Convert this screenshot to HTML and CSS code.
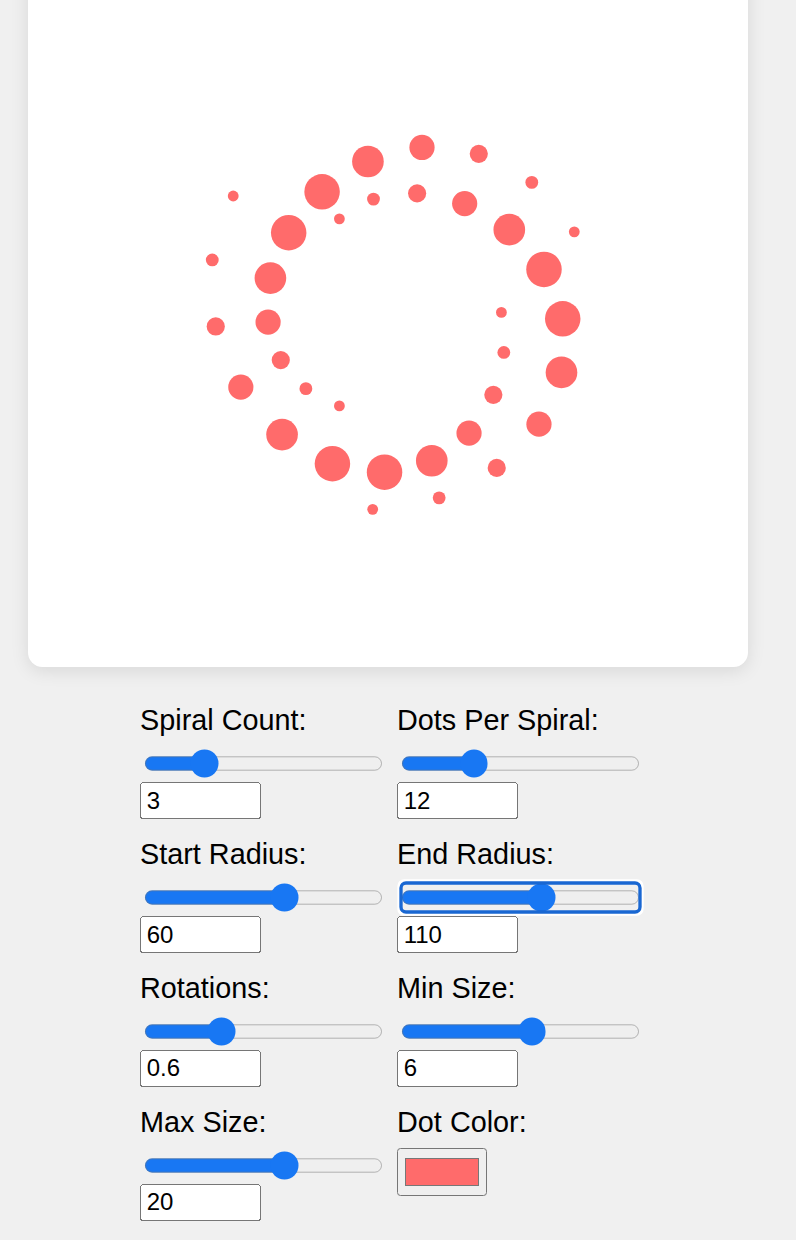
FILE: index.html
```html
<!DOCTYPE html>
<html lang="en">
<head>
<meta charset="utf-8">
<title>Spiral Dots</title>
<link rel="stylesheet" href="styles.css">
</head>
<body>
<div class="page">
  <div class="card">
    <svg id="dots" class="dots" width="400" height="400" viewBox="0 0 400 400"></svg>
  </div>
  <div class="controls">
    <div class="group">
      <label class="label">Spiral Count:</label>
      <input class="slider" type="range" min="1" max="10" step="1" value="3">
      <input class="num" type="number" value="3">
    </div>
    <div class="group">
      <label class="label">Dots Per Spiral:</label>
      <input class="slider" type="range" min="5" max="30" step="1" value="12">
      <input class="num" type="number" value="12">
    </div>
    <div class="group">
      <label class="label">Start Radius:</label>
      <input class="slider" type="range" min="0" max="100" step="1" value="60">
      <input class="num" type="number" value="60">
    </div>
    <div class="group">
      <label class="label">End Radius:</label>
      <input id="end" class="slider" type="range" min="50" max="150" step="1" value="110" autofocus>
      <input class="num" type="number" value="110">
    </div>
    <div class="group">
      <label class="label">Rotations:</label>
      <input class="slider" type="range" min="0" max="2" step="0.1" value="0.6">
      <input class="num" type="number" value="0.6" step="0.1">
    </div>
    <div class="group">
      <label class="label">Min Size:</label>
      <input class="slider" type="range" min="1" max="10" step="1" value="6">
      <input class="num" type="number" value="6">
    </div>
    <div class="group">
      <label class="label">Max Size:</label>
      <input class="slider" type="range" min="5" max="30" step="1" value="20">
      <input class="num" type="number" value="20">
    </div>
    <div class="group">
      <label class="label">Dot Color:</label>
      <input class="color" type="color" value="#ff6b6b">
    </div>
  </div>
</div>
<script src="script.js"></script>
</body>
</html>
```
FILE: styles.css
```css
html {
  zoom: 1.8;
}
body {
  margin: 0;
  background: #f0f0f0;
  font-family: "Liberation Sans", Arial, sans-serif;
  color: #000;
}
.page {
  padding-bottom: 20px;
}
.card {
  width: 400px;
  height: 400px;
  margin-top: -29.4px;
  margin-left: 15.56px;
  background: #fff;
  border-radius: 8px;
  box-shadow: 0 2px 10px rgba(0, 0, 0, 0.1);
}
.dots {
  display: block;
}
.controls {
  margin-top: 20.4px;
  margin-left: 77.8px;
  display: grid;
  grid-template-columns: 142.8px 142.8px;
  row-gap: 10.2px;
}
.group {
  display: flex;
  flex-direction: column;
  align-items: flex-start;
}
.label {
  display: block;
  font-size: 16px;
  margin-bottom: 5px;
}
.slider {
  width: 133px;
  margin: 2px;
  accent-color: #1877f3;
}
.slider:focus-visible {
  outline: 2px auto #1967d2;
}
.num {
  width: 60px;
  margin: 0;
  font-family: "Liberation Sans", Arial, sans-serif;
  font-size: 13.333px;
}
.color {
  margin: 0;
}
```
FILE: script.js
```js
(function () {
  var svg = document.getElementById('dots');
  var NS = 'http://www.w3.org/2000/svg';
  var spirals = 3, n = 12, r0 = 60, r1 = 110, rot = 0.6, smin = 6, smax = 20;
  for (var s = 0; s < spirals; s++) {
    for (var i = 0; i < n; i++) {
      var t = i / (n - 1);
      var ang = s * 2 * Math.PI / spirals + t * rot * 2 * Math.PI;
      var R = r0 + (r1 - r0) * t;
      var sn = Math.sin(Math.PI * t);
      var size = smin + (smax - smin) * sn * sn;
      var x = 200 + R * Math.cos(ang);
      var y = 200 + R * Math.sin(ang);
      var c = document.createElementNS(NS, 'circle');
      c.setAttribute('cx', (x + size / 2).toFixed(2));
      c.setAttribute('cy', (y + size / 2).toFixed(2));
      c.setAttribute('r', (size / 2).toFixed(2));
      c.setAttribute('fill', '#ff6b6b');
      svg.appendChild(c);
    }
  }
  var end = document.getElementById('end');
  if (end) end.focus();
})();
```
